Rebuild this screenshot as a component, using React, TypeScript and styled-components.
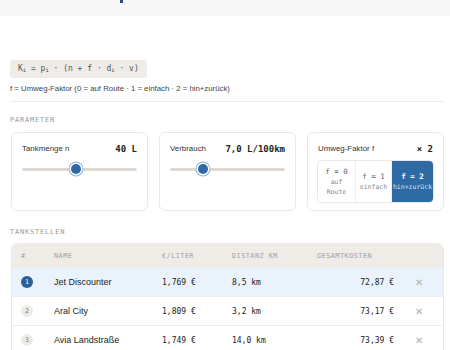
import styled, { createGlobalStyle } from 'styled-components'

const GlobalStyle = createGlobalStyle`
  html, body {
    margin: 0;
    padding: 0;
    background: #ffffff;
    font-family: 'Liberation Sans', Arial, sans-serif;
    color: #222;
    overflow: hidden;
  }
`

const mono = `'DejaVu Sans Mono', 'Liberation Mono', monospace`

const TopBar = styled.header`
  height: 16px;
  background: #f7f7f7;
  padding-left: 120px;
`

const TitleTail = styled.span`
  display: block;
  width: 3px;
  height: 3px;
  background: #2a4f80;
`

const Main = styled.main`
  padding: 41px 6px 0 10px;
`

const Formula = styled.div`
  display: inline-block;
  background: #efece8;
  border-radius: 3px;
  padding: 0 8px;
  height: 18px;
  line-height: 18px;
  font-family: ${mono};
  font-size: 8px;
  color: #555;
  white-space: pre;
  sub {
    font-size: 5.5px;
    vertical-align: -1px;
  }
`

const Caption = styled.p`
  margin: 5px 0 0;
  font-size: 7.8px;
  color: #444;
  line-height: 12px;
`

const Divider = styled.hr`
  border: none;
  border-top: 1px solid #ececec;
  margin: 6px 0 0;
`

const SectionLabel = styled.div<{ gap: number }>`
  font-family: ${mono};
  font-size: 7px;
  letter-spacing: 0.8px;
  color: #999;
  margin-top: ${({ gap }) => gap}px;
  line-height: 10px;
`

const Cards = styled.div`
  display: grid;
  grid-template-columns: repeat(3, 1fr);
  gap: 11px;
  margin: 7px 0 0 1px;
`

const Card = styled.div`
  border: 1px solid #e8e8e8;
  border-radius: 6px;
  padding: 8px 9px 9px 9px;
  height: 79px;
  box-sizing: border-box;
`

const CardHead = styled.div`
  display: flex;
  justify-content: space-between;
  align-items: center;
  height: 15px;
  padding: 0 1px;
`

const CardLabel = styled.span`
  font-size: 7.9px;
  color: #333;
`

const CardValue = styled.span`
  font-family: ${mono};
  font-size: 9px;
  font-weight: bold;
  color: #222;
`

const Track = styled.div`
  position: relative;
  height: 3px;
  border-radius: 2px;
  background: #ddd8d2;
  margin: 12px 1px 0;
`

const Thumb = styled.span`
  position: absolute;
  top: -4px;
  width: 10px;
  height: 10px;
  margin-left: -5px;
  border-radius: 50%;
  background: #2f6aa6;
  box-shadow: 0 0 0 1.5px #fff, 0 0 0 2.5px #8fb3d9;
`

const Segments = styled.div`
  display: grid;
  grid-template-columns: 37px 36px 1fr;
  margin-top: 4px;
  height: 41px;
  border: 1px solid #e8e8e8;
  border-radius: 5px;
  overflow: hidden;
`

const Segment = styled.div<{ active?: boolean }>`
  display: flex;
  flex-direction: column;
  align-items: center;
  justify-content: center;
  font-family: ${mono};
  font-size: 6.5px;
  line-height: 10px;
  color: ${({ active }) => (active ? '#d6e4f2' : '#888')};
  background: ${({ active }) => (active ? '#2e6aa3' : '#fff')};
  & + & {
    border-left: 1px solid #eee;
  }
`

const SegTop = styled.span<{ active?: boolean }>`
  font-size: 7.5px;
  line-height: 11px;
  color: ${({ active }) => (active ? '#fff' : '#666')};
  font-weight: ${({ active }) => (active ? 'bold' : 'normal')};
`

const Table = styled.div`
  margin: 6px 0 0 1px;
  border: 1px solid #e8e8e8;
  border-radius: 6px 6px 0 0;
  overflow: hidden;
`

const cols = '33px 108px 70px 85px 77px 1fr'

const HeadRow = styled.div`
  display: grid;
  grid-template-columns: ${cols};
  align-items: center;
  height: 23px;
  background: #efece8;
  padding-left: 9px;
  font-family: ${mono};
  font-size: 6.8px;
  letter-spacing: 0.5px;
  color: #a5a19c;
`

const Row = styled.div<{ highlight?: boolean }>`
  display: grid;
  grid-template-columns: ${cols};
  align-items: center;
  height: 29px;
  padding-left: 9px;
  background: ${({ highlight }) => (highlight ? '#eaf3fb' : '#fff')};
  border-top: 1px solid #eee;
  box-sizing: border-box;
`

const RankCell = styled.div`
  display: flex;
  align-items: center;
`

const Rank = styled.span<{ first?: boolean }>`
  display: flex;
  align-items: center;
  justify-content: center;
  width: 12px;
  height: 12px;
  border-radius: 50%;
  font-family: ${mono};
  font-size: 6.5px;
  background: ${({ first }) => (first ? '#2b5f96' : '#eeebe7')};
  color: ${({ first }) => (first ? '#fff' : '#777')};
`

const Name = styled.span`
  font-size: 9px;
  color: #222;
`

const Num = styled.span<{ right?: boolean }>`
  font-family: ${mono};
  font-size: 8px;
  color: #222;
  text-align: ${({ right }) => (right ? 'right' : 'left')};
`

const Remove = styled.span`
  text-align: center;
  color: #b0b0b0;
  font-size: 10px;
`

const stations = [
  { name: 'Jet Discounter', price: '1,769 €', dist: '8,5 km', total: '72,87 €' },
  { name: 'Aral City', price: '1,809 €', dist: '3,2 km', total: '73,17 €' },
  { name: 'Avia Landstraße', price: '1,749 €', dist: '14,0 km', total: '73,39 €' },
]

export default function App() {
  return (
    <>
      <GlobalStyle />
      <TopBar>
        <TitleTail />
      </TopBar>
      <Main>
        <Formula>
          K<sub>i</sub> = p<sub>i</sub> · (n + f · d<sub>i</sub> · v)
        </Formula>
        <Caption>f = Umweg-Faktor (0 = auf Route · 1 = einfach · 2 = hin+zurück)</Caption>
        <Divider />

        <SectionLabel gap={13}>PARAMETER</SectionLabel>
        <Cards>
          <Card>
            <CardHead>
              <CardLabel>Tankmenge n</CardLabel>
              <CardValue>40 L</CardValue>
            </CardHead>
            <Track>
              <Thumb style={{ left: '47%' }} />
            </Track>
          </Card>
          <Card>
            <CardHead>
              <CardLabel>Verbrauch</CardLabel>
              <CardValue>7,0 L/100km</CardValue>
            </CardHead>
            <Track>
              <Thumb style={{ left: '29%' }} />
            </Track>
          </Card>
          <Card>
            <CardHead>
              <CardLabel>Umweg-Faktor f</CardLabel>
              <CardValue>× 2</CardValue>
            </CardHead>
            <Segments>
              <Segment>
                <SegTop>f = 0</SegTop>
                <span>auf</span>
                <span>Route</span>
              </Segment>
              <Segment>
                <SegTop>f = 1</SegTop>
                <span>einfach</span>
              </Segment>
              <Segment active>
                <SegTop active>f = 2</SegTop>
                <span>hin+zurück</span>
              </Segment>
            </Segments>
          </Card>
        </Cards>

        <SectionLabel gap={16}>TANKSTELLEN</SectionLabel>
        <Table>
          <HeadRow>
            <span>#</span>
            <span>NAME</span>
            <span>€/LITER</span>
            <span>DISTANZ KM</span>
            <span>GESAMTKOSTEN</span>
            <span />
          </HeadRow>
          {stations.map((s, i) => (
            <Row key={s.name} highlight={i === 0}>
              <RankCell>
                <Rank first={i === 0}>{i + 1}</Rank>
              </RankCell>
              <Name>{s.name}</Name>
              <Num>{s.price}</Num>
              <Num>{s.dist}</Num>
              <Num right>{s.total}</Num>
              <Remove>✕</Remove>
            </Row>
          ))}
        </Table>
      </Main>
    </>
  )
}
